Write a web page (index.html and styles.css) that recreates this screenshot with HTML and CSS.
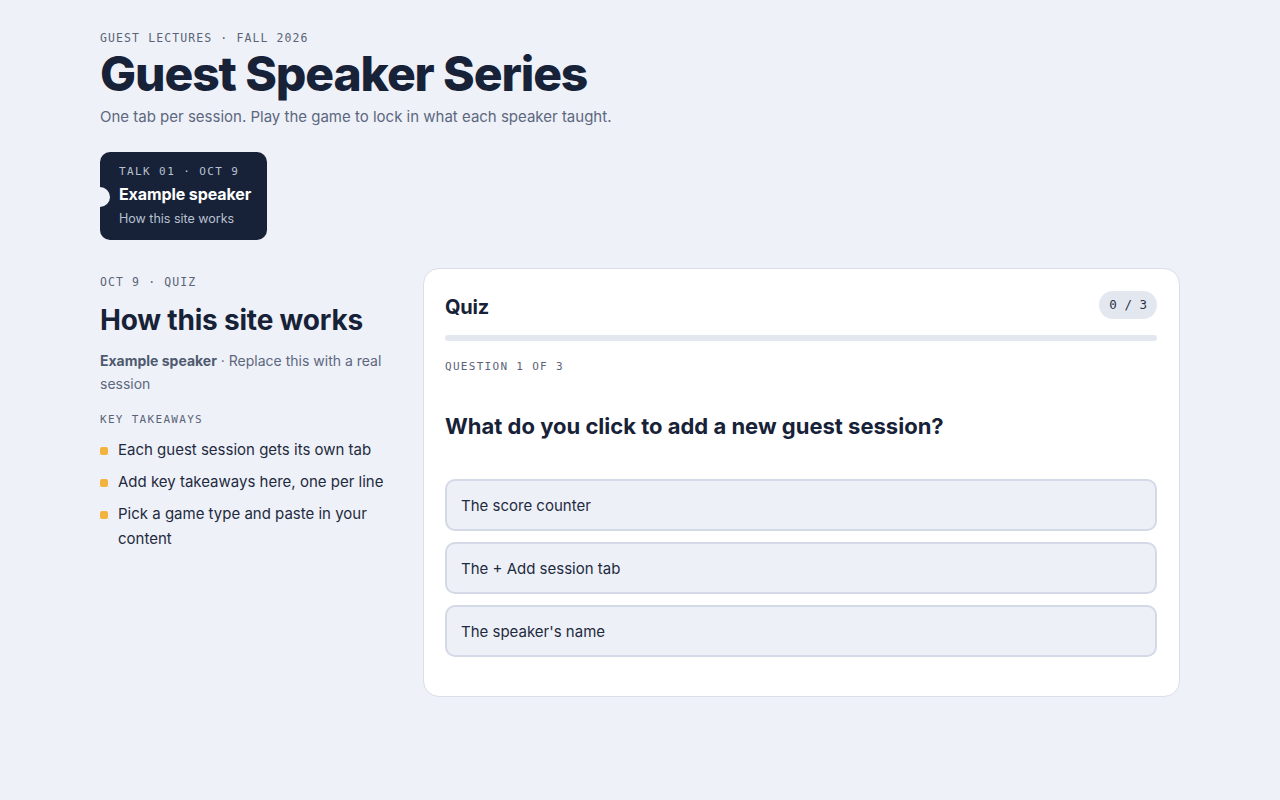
FILE: index.html
```html
<!DOCTYPE html>
<html lang="en">
<head>
  <meta charset="UTF-8">
  <title>Guest Speaker Series</title>
  <meta name="viewport" content="width=device-width, initial-scale=1.0">
  <link rel="stylesheet" href="styles.css">
</head>
<body>
  <div class="page">
    <header class="masthead">
      <div class="eyebrow">GUEST LECTURES · FALL 2026</div>
      <h1>Guest Speaker Series</h1>
      <p class="lede">One tab per session. Play the game to lock in what each speaker taught.</p>
    </header>

    <nav class="tabs">
      <button class="tab active">
        <span class="tab-meta">TALK 01 · OCT 9</span>
        <span class="tab-name">Example speaker</span>
        <span class="tab-topic">How this site works</span>
      </button>
    </nav>

    <main class="session">
      <section class="notes">
        <div class="eyebrow">OCT 9 · QUIZ</div>
        <h2>How this site works</h2>
        <p class="byline"><strong>Example speaker</strong> · Replace this with a real session</p>
        <div class="eyebrow small">KEY TAKEAWAYS</div>
        <ul class="takeaways">
          <li>Each guest session gets its own tab</li>
          <li>Add key takeaways here, one per line</li>
          <li>Pick a game type and paste in your content</li>
        </ul>
      </section>

      <section class="quiz">
        <div class="quiz-head">
          <h3>Quiz</h3>
          <span class="score">0 / 3</span>
        </div>
        <div class="progress"><div class="progress-fill" style="width: 0%"></div></div>
        <div class="eyebrow small">QUESTION 1 OF 3</div>
        <p class="question">What do you click to add a new guest session?</p>
        <div class="options">
          <button class="option">The score counter</button>
          <button class="option">The + Add session tab</button>
          <button class="option">The speaker's name</button>
        </div>
      </section>
    </main>
  </div>
</body>
</html>
```

FILE: styles.css
```css
* {
  box-sizing: border-box;
  margin: 0;
  padding: 0;
}

body {
  background: #eef1f7;
  color: #172238;
  font-family: 'Inter', 'Noto Sans', sans-serif;
}

.page {
  width: 1080px;
  margin: 0 auto;
  padding-top: 31px;
}

.eyebrow {
  font-family: 'DejaVu Sans Mono', 'Liberation Mono', monospace;
  font-size: 11.5px;
  letter-spacing: 1.1px;
  color: #5a6478;
  line-height: 14px;
}

.eyebrow.small {
  font-size: 11px;
  letter-spacing: 1.3px;
}

h1 {
  font-size: 48px;
  font-weight: 800;
  letter-spacing: -1.1px;
  line-height: 58px;
  margin-top: 0;
}

.lede {
  font-size: 15px;
  color: #5d6780;
  margin-top: 3px;
  line-height: 22px;
}

.tabs {
  display: flex;
  margin-top: 24px;
}

.tab {
  position: relative;
  display: flex;
  flex-direction: column;
  text-align: left;
  background: #172238;
  border: none;
  border-radius: 10px;
  padding: 13px 16px 13px 19px;
  font-family: inherit;
  cursor: pointer;
}

.tab::before {
  content: '';
  position: absolute;
  left: -10px;
  top: 35px;
  width: 20px;
  height: 20px;
  border-radius: 50%;
  background: #eef1f7;
}

.tab-meta {
  font-family: 'DejaVu Sans Mono', 'Liberation Mono', monospace;
  font-size: 11px;
  letter-spacing: 1.4px;
  color: #b8c0d0;
  line-height: 14px;
}

.tab-name {
  font-size: 16px;
  font-weight: 700;
  color: #ffffff;
  letter-spacing: -0.1px;
  margin-top: 5px;
  line-height: 20px;
}

.tab-topic {
  font-size: 12.5px;
  color: #b8c0d0;
  margin-top: 7px;
  line-height: 16px;
}

.session {
  display: grid;
  grid-template-columns: 290px 1fr;
  gap: 33px;
  margin-top: 28px;
  align-items: start;
}

.notes {
  padding-top: 7px;
}

.notes h2 {
  font-size: 28px;
  font-weight: 700;
  letter-spacing: -0.2px;
  line-height: 36px;
  margin-top: 13px;
}

.byline {
  font-size: 14px;
  line-height: 23px;
  color: #5d6780;
  margin-top: 11px;
}

.byline strong {
  font-weight: 700;
  color: #4f5a70;
}

.notes .eyebrow.small {
  margin-top: 18px;
}

.takeaways {
  list-style: none;
  margin-top: 10px;
  display: flex;
  flex-direction: column;
  gap: 7px;
}

.takeaways li {
  position: relative;
  padding-left: 18px;
  font-size: 15px;
  line-height: 25px;
  color: #1f2a40;
}

.takeaways li::before {
  content: '';
  position: absolute;
  left: 0;
  top: 10px;
  width: 8px;
  height: 8px;
  border-radius: 2px;
  background: #f4b23f;
}

.quiz {
  background: #ffffff;
  border: 1px solid #d9dee8;
  border-radius: 16px;
  padding: 22px 22px 39px 21px;
}

.quiz-head {
  display: flex;
  justify-content: space-between;
  align-items: center;
}

.quiz-head h3 {
  font-size: 20px;
  font-weight: 700;
  letter-spacing: -0.2px;
  position: relative;
  top: 2px;
}

.score {
  font-family: 'DejaVu Sans Mono', 'Liberation Mono', monospace;
  font-size: 12.5px;
  background: #e3e7f0;
  color: #2a3346;
  border-radius: 14px;
  padding: 0 10px;
  line-height: 28px;
  height: 28px;
}

.progress {
  height: 6px;
  background: #e3e7ef;
  border-radius: 3px;
  margin-top: 16px;
  overflow: hidden;
}

.progress-fill {
  height: 100%;
  background: #f4b23f;
}

.quiz .eyebrow.small {
  margin-top: 19px;
}

.question {
  font-size: 22px;
  font-weight: 700;
  letter-spacing: 0;
  line-height: 28px;
  margin-top: 38px;
}

.options {
  display: flex;
  flex-direction: column;
  gap: 11px;
  margin-top: 39px;
}

.option {
  text-align: left;
  font-family: inherit;
  font-size: 15px;
  color: #1f2a40;
  background: #edf1f7;
  border: 2px solid #d3d9e6;
  border-radius: 10px;
  height: 52px;
  padding: 0 14px;
  cursor: pointer;
}
```
